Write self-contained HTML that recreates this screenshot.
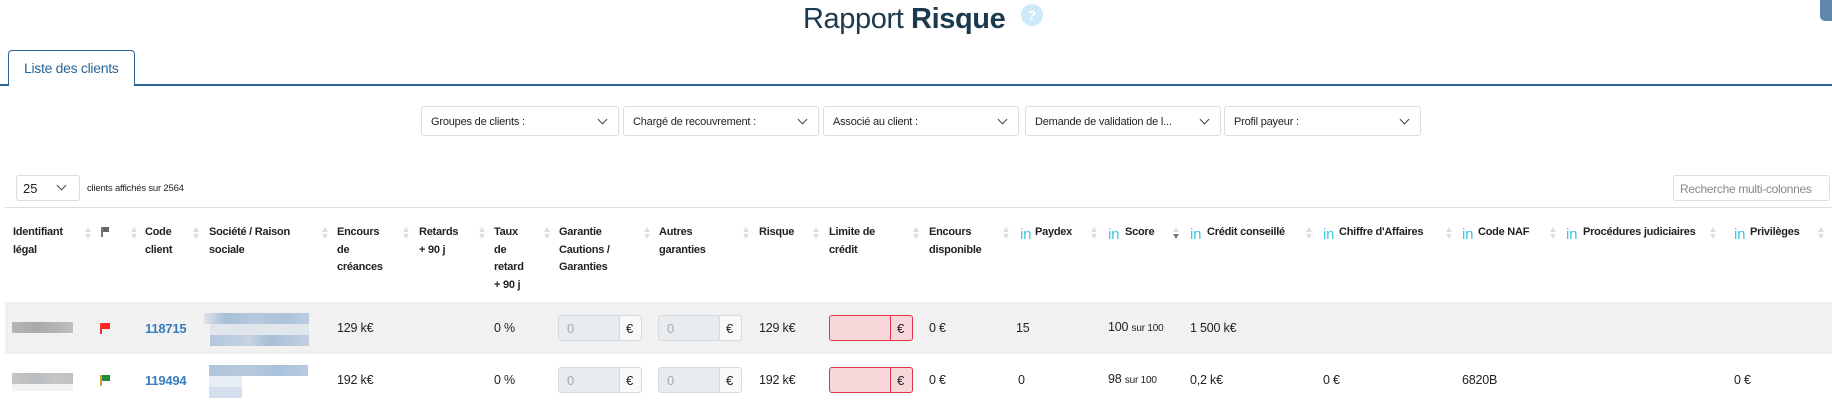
<!DOCTYPE html>
<html><head><meta charset="utf-8">
<style>
*{margin:0;padding:0;box-sizing:border-box}
body{width:1832px;height:406px;overflow:hidden;background:#fff;font-family:"Liberation Sans",Arial,sans-serif;color:#222;position:relative}
.a{position:absolute;white-space:nowrap}
.h{font-size:11px;font-weight:bold;line-height:17.5px;color:#222;letter-spacing:-0.25px}
.s{position:absolute;width:6px;height:14px}
.s:before{content:"";position:absolute;left:0;top:0;border-left:3px solid transparent;border-right:3px solid transparent;border-bottom:5px solid #ddd}
.s:after{content:"";position:absolute;left:0;top:7px;border-left:3px solid transparent;border-right:3px solid transparent;border-top:5px solid #ddd}
.s.d:after{border-top-color:#777}
.in{color:#3cc8e0;font-size:15px;font-weight:normal;position:absolute;top:2px}
.d12{font-size:12.5px;letter-spacing:-0.2px}
.sel{position:absolute;top:106px;height:30px;border:1px solid #ddd;border-radius:3px;font-size:11px;letter-spacing:-0.2px;padding:9px 0 0 9px;color:#222}
.chev{position:absolute;right:12px;top:9px;width:7px;height:7px;border-right:1.3px solid #444;border-bottom:1.3px solid #444;transform:rotate(45deg)}
.inp{position:absolute;height:26px;width:84px;border:1px solid #d7dce0;border-radius:3px;background:#e9ecef;font-size:13px;color:#aaa;padding:5px 0 0 8px}
.inp span{position:absolute;right:0;top:0;width:22px;height:24px;background:#f8f9fa;border-left:1px solid #d7dce0;color:#222;padding:5px 0 0 6px;border-radius:0 3px 3px 0}
.inp.r{background:#f8d7da;border-color:#dc3545}
.inp.r span{background:#f8d7da;border-left-color:#dc3545}
.blur{position:absolute}
</style></head><body>
<div class="a" style="left:803px;top:-1px;font-size:29px;color:#1c3a4f;line-height:40px;letter-spacing:-0.4px">Rapport <b style="font-weight:600">Risque</b></div>
<div class="a" style="left:1021px;top:4px;width:22px;height:22px;border-radius:50%;background:#cdeafa;color:#fff;font-size:14px;font-weight:bold;text-align:center;line-height:22px">?</div>
<div class="a" style="left:1820px;top:0;width:12px;height:21px;background:#5f86ad;border-radius:0 0 0 5px"></div>

<div class="a" style="left:0;top:84px;width:1832px;height:1.5px;background:#2a6496"></div>
<div class="a" style="left:8px;top:50px;width:127px;height:36px;border:1px solid #2a6496;border-bottom:none;border-radius:4px 4px 0 0;background:#fff"></div>
<div class="a" style="left:24px;top:60px;font-size:14px;color:#2a6496;letter-spacing:-0.3px">Liste des clients</div>

<div class="sel" style="left:421px;width:198px">Groupes de clients :<i class="chev"></i></div>
<div class="sel" style="left:623px;width:196px">Chargé de recouvrement :<i class="chev"></i></div>
<div class="sel" style="left:823px;width:196px">Associé au client :<i class="chev"></i></div>
<div class="sel" style="left:1025px;width:196px">Demande de validation de l...<i class="chev"></i></div>
<div class="sel" style="left:1224px;width:197px">Profil payeur :<i class="chev"></i></div>

<div class="a" style="left:16px;top:175px;width:64px;height:26px;border:1px solid #ddd;border-radius:3px;font-size:13px;padding:5px 0 0 6px">25<i class="chev" style="right:14px;top:6px"></i></div>
<div class="a" style="left:87px;top:183px;font-size:9.5px;letter-spacing:-0.2px">clients affichés sur 2564</div>
<div class="a" style="left:1673px;top:175px;width:157px;height:26px;border:1px solid #ddd;border-radius:3px;font-size:12px;letter-spacing:-0.3px;color:#888;padding:6px 0 0 6px">Recherche multi-colonnes</div>

<div class="a" style="left:5px;top:207px;width:1827px;height:1px;background:#ddd"></div>

<div class="a h" style="left:13px;top:224px">Identifiant<br>légal</div><i class="s" style="left:85px;top:227px"></i>
<div class="a" style="left:101px;top:227px;width:2px;height:10px;background:#777"></div><div class="a" style="left:103px;top:227px;width:6px;height:5px;background:#666"></div><i class="s" style="left:131px;top:227px"></i>
<div class="a h" style="left:145px;top:224px">Code<br>client</div><i class="s" style="left:193px;top:227px"></i>
<div class="a h" style="left:209px;top:224px">Société / Raison<br>sociale</div><i class="s" style="left:322px;top:227px"></i>
<div class="a h" style="left:337px;top:224px">Encours<br>de<br>créances</div><i class="s" style="left:403px;top:227px"></i>
<div class="a h" style="left:419px;top:224px">Retards<br>+ 90 j</div><i class="s" style="left:479px;top:227px"></i>
<div class="a h" style="left:494px;top:224px">Taux<br>de<br>retard<br>+ 90 j</div><i class="s" style="left:544px;top:227px"></i>
<div class="a h" style="left:559px;top:224px">Garantie<br>Cautions /<br>Garanties</div><i class="s" style="left:644px;top:227px"></i>
<div class="a h" style="left:659px;top:224px">Autres<br>garanties</div><i class="s" style="left:743px;top:227px"></i>
<div class="a h" style="left:759px;top:224px">Risque</div><i class="s" style="left:813px;top:227px"></i>
<div class="a h" style="left:829px;top:224px">Limite de<br>crédit</div><i class="s" style="left:913px;top:227px"></i>
<div class="a h" style="left:929px;top:224px">Encours<br>disponible</div><i class="s" style="left:1003px;top:227px"></i>
<div class="a h" style="left:1020px;top:224px"><span class="in" style="left:0">in</span><span style="margin-left:15px">Paydex</span></div><i class="s" style="left:1091px;top:227px"></i>
<div class="a h" style="left:1108px;top:224px"><span class="in" style="left:0">in</span><span style="margin-left:17px">Score</span></div><i class="s d" style="left:1173px;top:227px"></i>
<div class="a h" style="left:1190px;top:224px"><span class="in" style="left:0">in</span><span style="margin-left:17px">Crédit conseillé</span></div><i class="s" style="left:1306px;top:227px"></i>
<div class="a h" style="left:1323px;top:224px"><span class="in" style="left:0">in</span><span style="margin-left:16px">Chiffre d'Affaires</span></div><i class="s" style="left:1446px;top:227px"></i>
<div class="a h" style="left:1462px;top:224px"><span class="in" style="left:0">in</span><span style="margin-left:16px">Code NAF</span></div><i class="s" style="left:1550px;top:227px"></i>
<div class="a h" style="left:1566px;top:224px"><span class="in" style="left:0">in</span><span style="margin-left:17px">Procédures judiciaires</span></div><i class="s" style="left:1710px;top:227px"></i>
<div class="a h" style="left:1734px;top:224px"><span class="in" style="left:0">in</span><span style="margin-left:16px">Privilèges</span></div><i class="s" style="left:1818px;top:227px"></i>

<div class="a" style="left:5px;top:302px;width:1827px;height:52px;background:#f1f1f1"></div>

<!-- row 1 -->
<div class="blur" style="left:12px;top:322px;width:61px;height:11px;background:linear-gradient(90deg,#b8b4b3,#aaa 40%,#b3b3b5 70%,#bfbfc1)"></div>
<div class="blur" style="left:100px;top:323px;width:2px;height:11px;background:#e33"></div><div class="blur" style="left:102px;top:323px;width:8px;height:6px;background:#f22"></div>
<div class="a" style="left:145px;top:321px;font-size:13px;font-weight:bold;color:#3a7bbf;letter-spacing:-0.2px">118715</div>
<div class="blur" style="left:204px;top:313px;width:105px;height:11px;background:linear-gradient(90deg,#dde3ea,#a7bfd7 20%,#b7c9dc 50%,#abc2d9 75%,#bccde0)"></div>
<div class="blur" style="left:210px;top:324px;width:99px;height:11px;background:#e1e6ec"></div>
<div class="blur" style="left:210px;top:335px;width:99px;height:11px;background:linear-gradient(90deg,#b3c7dc,#c5d3e2 40%,#a9bfd6 60%,#c1cfdf)"></div>
<div class="a d12" style="left:337px;top:321px">129 k€</div>
<div class="a d12" style="left:494px;top:321px">0 %</div>
<div class="inp" style="left:558px;top:315px">0<span>€</span></div>
<div class="inp" style="left:658px;top:315px">0<span>€</span></div>
<div class="a d12" style="left:759px;top:321px">129 k€</div>
<div class="inp r" style="left:829px;top:315px"><span>€</span></div>
<div class="a d12" style="left:929px;top:321px">0 €</div>
<div class="a d12" style="left:1016px;top:321px">15</div>
<div class="a d12" style="left:1108px;top:320px">100 <span style="font-size:10px">sur 100</span></div>
<div class="a d12" style="left:1190px;top:321px">1 500 k€</div>

<!-- row 2 -->
<div class="blur" style="left:12px;top:373px;width:61px;height:11px;background:linear-gradient(90deg,#cbc4c0,#b9bcc0 40%,#c6c6c8 70%,#c0c0c3)"></div>
<div class="blur" style="left:12px;top:384px;width:61px;height:7px;background:#f3f3f4"></div>
<div class="blur" style="left:100px;top:375px;width:2px;height:11px;background:#cfa23a"></div><div class="blur" style="left:102px;top:375px;width:8px;height:6px;background:#1e8a3a"></div>
<div class="a" style="left:145px;top:373px;font-size:13px;font-weight:bold;color:#3a7bbf;letter-spacing:-0.2px">119494</div>
<div class="blur" style="left:209px;top:365px;width:99px;height:11px;background:linear-gradient(90deg,#b0c4da,#b7c9dc 40%,#a8c1da 70%,#b8cbe0)"></div>
<div class="blur" style="left:209px;top:376px;width:33px;height:11px;background:#e6edf5"></div>
<div class="blur" style="left:209px;top:387px;width:33px;height:11px;background:#d3dfec"></div>
<div class="a d12" style="left:337px;top:373px">192 k€</div>
<div class="a d12" style="left:494px;top:373px">0 %</div>
<div class="inp" style="left:558px;top:367px">0<span>€</span></div>
<div class="inp" style="left:658px;top:367px">0<span>€</span></div>
<div class="a d12" style="left:759px;top:373px">192 k€</div>
<div class="inp r" style="left:829px;top:367px"><span>€</span></div>
<div class="a d12" style="left:929px;top:373px">0 €</div>
<div class="a d12" style="left:1018px;top:373px">0</div>
<div class="a d12" style="left:1108px;top:372px">98 <span style="font-size:10px">sur 100</span></div>
<div class="a d12" style="left:1190px;top:373px">0,2 k€</div>
<div class="a d12" style="left:1323px;top:373px">0 €</div>
<div class="a d12" style="left:1462px;top:373px">6820B</div>
<div class="a d12" style="left:1734px;top:373px">0 €</div>
</body></html>
